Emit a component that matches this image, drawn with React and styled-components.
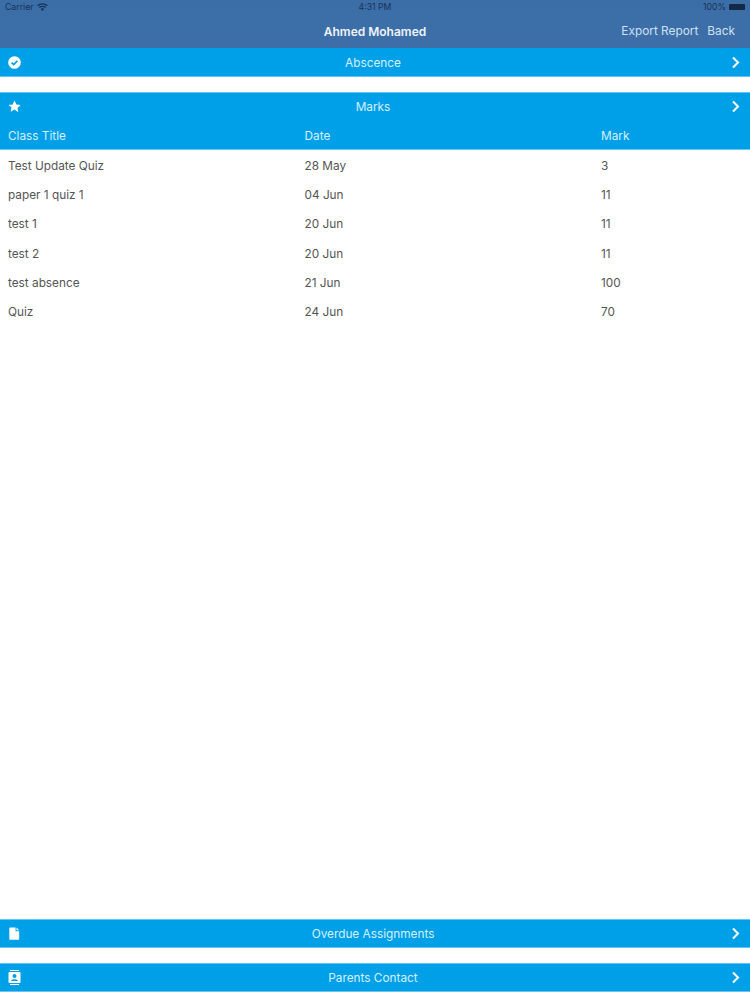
import React from "react";
import styled, { createGlobalStyle } from "styled-components";

const Global = createGlobalStyle`
  html, body { margin: 0; padding: 0; background: #fff; }
  body { font-family: Inter, "Liberation Sans", sans-serif; }
  #root { height: 1000px; }
`;

const Page = styled.div`
  width: 750px;
  height: 1000px;
  display: flex;
  flex-direction: column;
  overflow: hidden;
  background: #fff;
`;

const NavBar = styled.header`
  height: 48px;
  flex: none;
  display: flex;
  flex-direction: column;
  background: linear-gradient(#3b6ea6, #3d6ea8);
`;

const StatusBar = styled.div`
  height: 14px;
  padding: 0 5px;
  display: grid;
  grid-template-columns: 1fr auto 1fr;
  align-items: center;
  font-size: 8.7px;
  color: #14294a;
  opacity: 0.85;
`;

const StatusLeft = styled.div`
  display: flex;
  align-items: center;
  gap: 4px;
`;

const StatusRight = styled.div`
  display: flex;
  align-items: center;
  justify-content: flex-end;
  gap: 3px;
`;

const Battery = styled.span`
  width: 16px;
  height: 6px;
  background: #0e1e38;
  border-radius: 1px;
`;

const NavRow = styled.div`
  position: relative;
  height: 34px;
  display: flex;
  align-items: center;
  justify-content: center;
  box-sizing: border-box;
`;

const NavTitle = styled.div`
  font-size: 12px;
  font-weight: 600;
  color: #eef3f9;
`;

const NavActions = styled.div`
  position: absolute;
  right: 15px;
  top: 10px;
  display: flex;
  gap: 9px;
  font-size: 11.85px;
  color: #cfe0f2;
`;

const Bar = styled.div`
  height: 29px;
  flex: none;
  box-sizing: border-box;
  display: grid;
  grid-template-columns: 30px 1fr 30px;
  align-items: center;
  background: #00a0e9;
  color: #d6f0ff;
  font-size: 11.8px;
  box-shadow: ${(p) => (p.$attached ? "inset 0 1px 0 #63c6f3" : "inset 0 -1px 0 #63c6f3")}${(p) => (p.$topEdge ? ", inset 0 1px 0 #63c6f3" : "")};
`;

const BarIcon = styled.span`
  display: flex;
  justify-content: center;
  padding-right: 1px;
`;

const BarTitle = styled.span`
  text-align: center;
  padding-right: 4px;
`;

const Chevron = styled.span`
  display: flex;
  justify-content: flex-end;
  padding-right: 10px;
`;

const Gap = styled.div`
  height: 15px;
  flex: none;
`;

const HeaderRow = styled.div`
  height: 29px;
  flex: none;
  display: grid;
  grid-template-columns: 296.5px 296.5px 1fr;
  align-items: center;
  background: #00a0e9;
  color: #d6f0ff;
  font-size: 11.8px;
  box-shadow: inset 0 -1px 0 #63c6f3;
  box-sizing: border-box;
`;

const Row = styled.div`
  height: 29.3px;
  flex: none;
  box-sizing: border-box;
  padding-top: 2px;
  display: grid;
  grid-template-columns: 296.5px 296.5px 1fr;
  align-items: center;
  color: #555;
  font-size: 11.8px;
`;

const Cell = styled.span`
  padding-left: 8px;
`;

const Spacer = styled.div`
  flex: 1;
`;

const BottomPad = styled.div`
  height: 8px;
  flex: none;
`;

const ChevronIcon = () => (
  <svg width="9" height="13" viewBox="0 0 9 13">
    <path d="M2 1.5 L7 6.5 L2 11.5" fill="none" stroke="#fff" strokeWidth="2" />
  </svg>
);

const CheckIcon = () => (
  <svg width="13" height="13" viewBox="0 0 13 13">
    <circle cx="6.5" cy="6.5" r="6.3" fill="#fff" />
    <path d="M3.6 6.6 L5.7 8.6 L9.5 4.7" fill="none" stroke="#00a0e9" strokeWidth="1.6" />
  </svg>
);

const StarIcon = () => (
  <svg width="13" height="13" viewBox="0 0 24 24">
    <path fill="#fff" d="M12 1l3.4 7.2 7.9 1-5.8 5.4 1.5 7.9L12 17.7l-7 3.8 1.5-7.9L.7 9.2l7.9-1z" />
  </svg>
);

const DocIcon = () => (
  <svg width="11" height="13" viewBox="0 0 11 13">
    <path fill="#fff" d="M1 0.5 H6.6 V4.2 H10.2 V12 a0.7 0.7 0 0 1 -0.7 0.7 H1 a0.7 0.7 0 0 1 -0.7 -0.7 V1.2 A0.7 0.7 0 0 1 1 0.5z M7.5 0.6 L10.2 3.3 H7.5z" />
  </svg>
);

const ContactIcon = () => (
  <svg width="13" height="15" viewBox="0 0 13 15">
    <rect x="2" y="0" width="9" height="1" fill="#fff" />
    <rect x="2" y="14" width="9" height="1" fill="#fff" />
    <rect x="0.5" y="2" width="12" height="11" rx="1" fill="#fff" />
    <circle cx="6.5" cy="6" r="2" fill="#00a0e9" />
    <path d="M3 11 C3 8.6 10 8.6 10 11z" fill="#00a0e9" />
  </svg>
);

const WifiIcon = () => (
  <svg width="11" height="8" viewBox="0 0 11 8">
    <path d="M0.6 2.8 C3.3 0.2 7.7 0.2 10.4 2.8" fill="none" stroke="#14294a" strokeWidth="1.2" />
    <path d="M2.3 4.5 C4 2.9 7 2.9 8.7 4.5" fill="none" stroke="#14294a" strokeWidth="1.2" />
    <path fill="#14294a" d="M5.5 8 L3.6 5.8 C4.6 5 6.4 5 7.4 5.8z" />
  </svg>
);

const marks = [
  ["Test Update Quiz", "28 May", "3"],
  ["paper 1 quiz 1", "04 Jun", "11"],
  ["test 1", "20 Jun", "11"],
  ["test 2", "20 Jun", "11"],
  ["test absence", "21 Jun", "100"],
  ["Quiz", "24 Jun", "70"],
];

const SectionBar = ({ icon, title, attached, topEdge }) => (
  <Bar $attached={attached} $topEdge={topEdge}>
    <BarIcon>{icon}</BarIcon>
    <BarTitle>{title}</BarTitle>
    <Chevron><ChevronIcon /></Chevron>
  </Bar>
);

export default function App() {
  return (
    <Page>
      <Global />
      <NavBar>
        <StatusBar>
          <StatusLeft>Carrier <WifiIcon /></StatusLeft>
          <span>4:31 PM</span>
          <StatusRight>100% <Battery /></StatusRight>
        </StatusBar>
        <NavRow>
          <NavTitle>Ahmed Mohamed</NavTitle>
          <NavActions>
            <span>Export Report</span>
            <span>Back</span>
          </NavActions>
        </NavRow>
      </NavBar>
      <SectionBar icon={<CheckIcon />} title="Abscence" />
      <Gap />
      <SectionBar icon={<StarIcon />} title="Marks" attached />
      <HeaderRow>
        <Cell>Class Title</Cell>
        <Cell>Date</Cell>
        <Cell>Mark</Cell>
      </HeaderRow>
      {marks.map((m) => (
        <Row key={m[0]}>
          <Cell>{m[0]}</Cell>
          <Cell>{m[1]}</Cell>
          <Cell>{m[2]}</Cell>
        </Row>
      ))}
      <Spacer />
      <SectionBar icon={<DocIcon />} title="Overdue Assignments" topEdge />
      <Gap />
      <SectionBar icon={<ContactIcon />} title="Parents Contact" topEdge />
      <BottomPad />
    </Page>
  );
}
